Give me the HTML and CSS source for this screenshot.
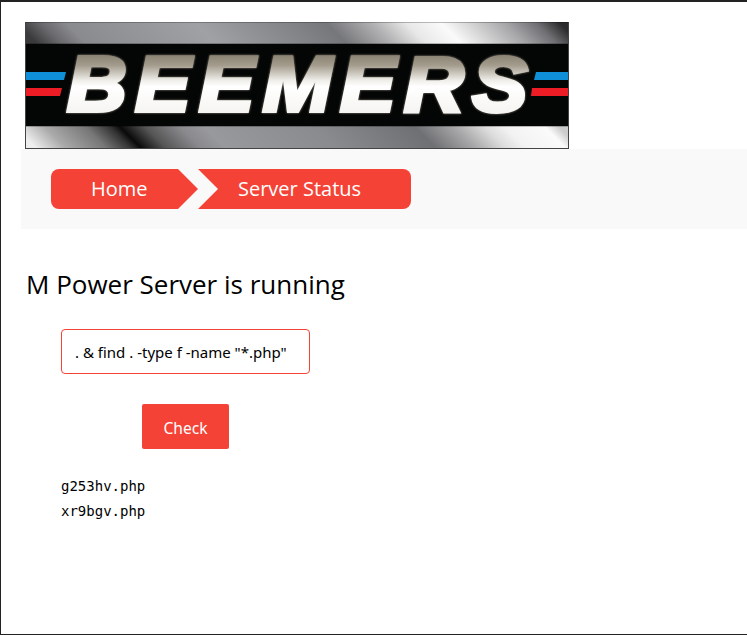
FILE: index.html
```html
<!DOCTYPE html>
<html lang="en">
<head>
  <meta charset="UTF-8" />
  <meta name="viewport" content="width=device-width, initial-scale=1.0" />
  <title>Server Status</title>
  <link rel="stylesheet" href="styles.css">
</head>
<body>
  <div class="logo-wrap">
    <svg class="logo" width="544" height="127" viewBox="0 0 544 127" role="img" aria-label="Beemers">
      <defs>
        <!-- slanted sheen: offset follows x, shifted by y at 45deg -->
        <linearGradient id="bandTop" gradientUnits="userSpaceOnUse" x1="0" y1="10" x2="272" y2="-262">
          <stop offset="0" stop-color="#3a3a3c" />
          <stop offset="0.046" stop-color="#6a6a6e" />
          <stop offset="0.092" stop-color="#8a8b8f" />
          <stop offset="0.33" stop-color="#a0a1a5" />
          <stop offset="0.515" stop-color="#808185" />
          <stop offset="0.57" stop-color="#76777a" />
          <stop offset="0.653" stop-color="#b0b0b2" />
          <stop offset="0.717" stop-color="#e8e8e8" />
          <stop offset="0.781" stop-color="#fafafa" />
          <stop offset="0.818" stop-color="#e0e0e0" />
          <stop offset="0.9" stop-color="#a5a5a8" />
          <stop offset="0.956" stop-color="#707074" />
          <stop offset="1" stop-color="#2a2a2c" />
        </linearGradient>
        <linearGradient id="bandBottom" gradientUnits="userSpaceOnUse" x1="0" y1="115" x2="272" y2="-157">
          <stop offset="0" stop-color="#eeeeee" />
          <stop offset="0.055" stop-color="#aaaaaa" />
          <stop offset="0.129" stop-color="#777777" />
          <stop offset="0.175" stop-color="#333333" />
          <stop offset="0.193" stop-color="#0a0a0a" />
          <stop offset="0.239" stop-color="#555555" />
          <stop offset="0.303" stop-color="#8a8a8e" />
          <stop offset="0.349" stop-color="#98999d" />
          <stop offset="0.551" stop-color="#8a8b8f" />
          <stop offset="0.735" stop-color="#6f7073" />
          <stop offset="0.809" stop-color="#a8a8aa" />
          <stop offset="0.864" stop-color="#dddddd" />
          <stop offset="0.9" stop-color="#f2f2f2" />
          <stop offset="0.974" stop-color="#fbfbfb" />
          <stop offset="1" stop-color="#cccccc" />
        </linearGradient>
        <linearGradient id="chrome" gradientUnits="userSpaceOnUse" x1="0" y1="31" x2="0" y2="92">
          <stop offset="0" stop-color="#857d6e" />
          <stop offset="0.2" stop-color="#a39b8c" />
          <stop offset="0.45" stop-color="#efeeea" />
          <stop offset="0.55" stop-color="#ffffff" />
          <stop offset="1" stop-color="#f5f4f1" />
        </linearGradient>
      </defs>
      <rect width="544" height="127" fill="#040606" />
      <rect y="0" width="544" height="22" fill="url(#bandTop)" />
      <rect y="21" width="544" height="1" fill="#000" fill-opacity="0.25" />
      <rect y="0" width="544" height="1" fill="#000" fill-opacity="0.25" />
      <rect y="104" width="544" height="23" fill="url(#bandBottom)" />
      <rect y="104" width="544" height="1" fill="#000" fill-opacity="0.25" />
      <rect x="0" y="0" width="1" height="127" fill="#444446" />
      <rect x="543" y="0" width="1" height="127" fill="#444446" />
      <rect x="0" y="126" width="544" height="1" fill="#444446" />
      <polygon points="1,50 41,50 39,58 1,58" fill="#0f8fd8" />
      <polygon points="1,66 37,66 35,74 1,74" fill="#ee1c25" />
      <polygon points="511,50 543,50 543,58 509,58" fill="#0f8fd8" />
      <polygon points="507,66 543,66 543,74 506,74" fill="#ee1c25" />
      <text class="logo-text" x="42" y="89" textLength="469" lengthAdjust="spacingAndGlyphs">BEEMERS</text>
    </svg>
  </div>

  <nav class="crumbs">
    <a class="crumb crumb-first" href="#">Home</a>
    <a class="crumb crumb-last" href="#">Server Status</a>
  </nav>

  <h1 class="title">M Power Server is running</h1>

  <form class="check-form">
    <input class="cmd-input" type="text" value=". &amp; find . -type f -name &quot;*.php&quot;">
    <button class="check-btn" type="button">Check</button>
  </form>

  <pre class="output">g253hv.php
xr9bgv.php</pre>
</body>
</html>
```

FILE: styles.css
```css
html, body {
  height: 100%;
}
body {
  margin: 0;
  box-sizing: border-box;
  overflow: hidden;
  background: white;
  color: black;
  font-family: "Open Sans", sans-serif;
  border-top: 2px solid #222;
  border-left: 1px solid #222;
  border-bottom: 1px solid #222;
}
.logo-wrap {
  padding: 20px 0 0 24px;
  line-height: 0;
}
.logo-text {
  font-family: "Liberation Sans", sans-serif;
  font-size: 78px;
  font-weight: bold;
  font-style: italic;
  letter-spacing: 8px;
  fill: url(#chrome);
  stroke: url(#chrome);
  stroke-width: 4px;
  filter: drop-shadow(0 0 0.8px #8f8778);
}
.crumbs {
  display: flex;
  margin-left: 20px;
  padding: 20px 30px;
  background-color: #f9f9f9;
}
.crumb {
  display: block;
  height: 40px;
  padding-left: 40px;
  box-sizing: border-box;
  background-color: #f44336;
  color: white;
  font-size: 20px;
  line-height: 40px;
  text-decoration: none;
}
.crumb-first {
  width: 147px;
  border-radius: 8px 0 0 8px;
  clip-path: polygon(0 0, 127px 0, 100% 50%, 127px 100%, 0 100%);
}
.crumb-last {
  width: 213px;
  border-radius: 0 8px 8px 0;
  clip-path: polygon(0 0, 100% 0, 100% 100%, 0 100%, 20px 50%);
}
.title {
  margin: 35px 0 0 25px;
  font-size: 26px;
  font-weight: normal;
  line-height: 40px;
}
.check-form {
  display: flex;
  flex-direction: column;
  align-items: flex-start;
  margin: 25px 0 0 60px;
}
.cmd-input {
  width: 249px;
  height: 45px;
  padding: 0 13px;
  box-sizing: border-box;
  border: 1px solid #f44336;
  border-radius: 4px;
  background: white;
  color: black;
  font-family: "Noto Sans", sans-serif;
  font-size: 15px;
}
.check-btn {
  width: 87px;
  height: 45px;
  margin: 30px 0 0 81px;
  padding: 2px 0 0;
  border: none;
  border-radius: 2px;
  background-color: #f44336;
  color: #fff;
  font-family: "Noto Sans", sans-serif;
  font-size: 15.6px;
}
.output {
  margin: 25px 0 0 60px;
  font-family: "DejaVu Sans Mono", monospace;
  font-size: 14px;
  line-height: 25px;
}
```
